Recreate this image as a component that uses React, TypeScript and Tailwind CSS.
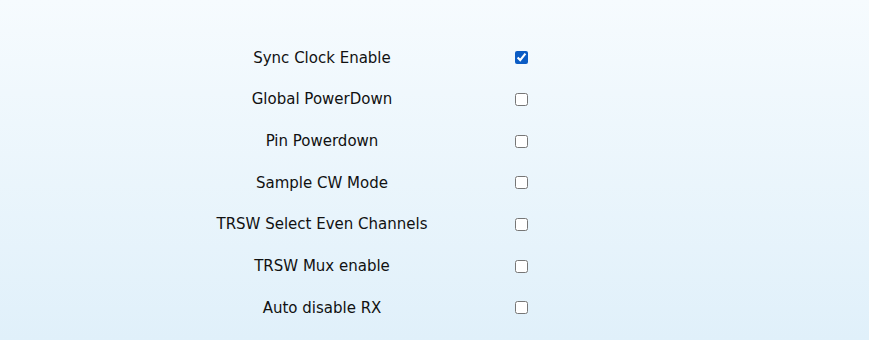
import React from "react";

const rows: [string, boolean][] = [
  ["Sync Clock Enable", true],
  ["Global PowerDown", false],
  ["Pin Powerdown", false],
  ["Sample CW Mode", false],
  ["TRSW Select Even Channels", false],
  ["TRSW Mux enable", false],
  ["Auto disable RX", false],
];

export default function App() {
  return (
    <div
      className="w-[869px] h-[340px] bg-gradient-to-b from-[#f6fbfe] to-[#e0f0fa] pt-[37px] text-[#111]"
      style={{ fontFamily: '"DejaVu Sans", Verdana, sans-serif' }}
    >
      <div className="ml-[180px] flex flex-col">
        {rows.map(([label, checked]) => (
          <div key={label} className="flex items-center h-[41.67px]">
            <div className="w-[284px] text-center text-[15px]">{label}</div>
            <div className="w-[114px] flex justify-center">
              <input
                type="checkbox"
                defaultChecked={checked}
                className="w-[13px] h-[13px] m-0 accent-[#0b5cc4]"
              />
            </div>
          </div>
        ))}
      </div>
    </div>
  );
}
